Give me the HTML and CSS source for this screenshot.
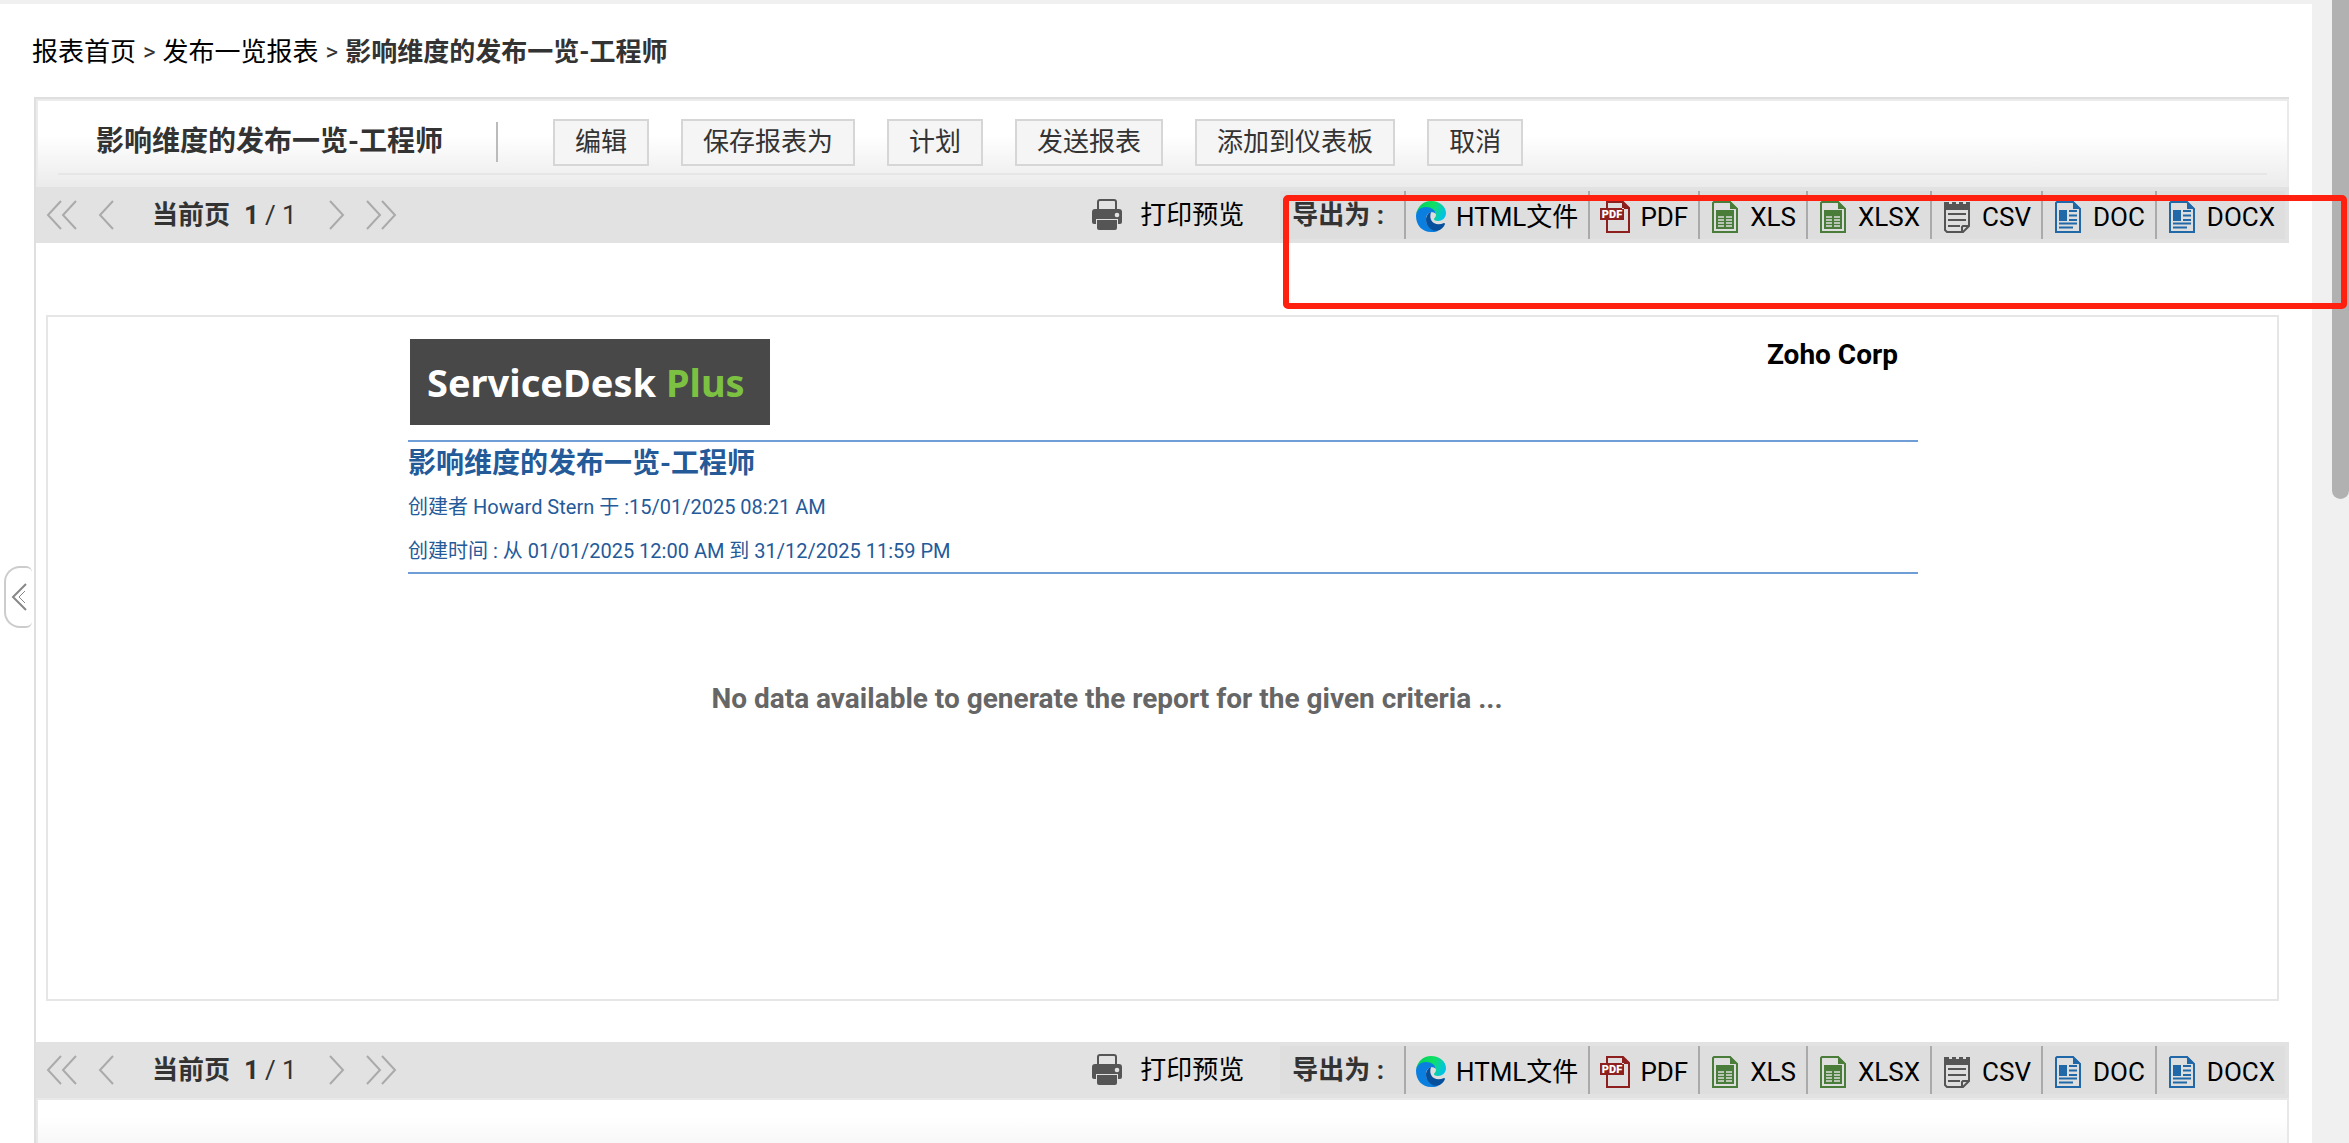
FILE: index.html
```html
<!DOCTYPE html>
<html lang="zh-CN">
<head>
  <meta charset="UTF-8">
  <meta name="viewport" content="width=device-width, initial-scale=1.0">
  <title>影响维度的发布一览-工程师</title>
  <link rel="stylesheet" href="styles.css">
</head>
<body>
  <!-- 图标 -->
  <svg class="sprite" aria-hidden="true">
    <defs>
      <linearGradient id="edgeTop" x1="0" y1="0.3" x2="1" y2="0.6">
        <stop offset="0" stop-color="#00d060"></stop>
        <stop offset="0.5" stop-color="#10e060"></stop>
        <stop offset="1" stop-color="#00c0f0"></stop>
      </linearGradient>
    </defs>
    <symbol id="i-first" viewBox="0 0 32 30"><path d="M15 1 2 15l13 14M30 1 17 15l13 14"></path></symbol>
    <symbol id="i-prev" viewBox="0 0 16 30"><path d="M15 1 2 15l13 14"></path></symbol>
    <symbol id="i-next" viewBox="0 0 16 30"><path d="M1 1l13 14L1 29"></path></symbol>
    <symbol id="i-last" viewBox="0 0 32 30"><path d="M2 1l13 14L2 29M17 1l13 14-13 14"></path></symbol>
    <symbol id="i-print" viewBox="0 0 30 32">
      <path d="M6 10V3a2 2 0 0 1 2-2h14a2 2 0 0 1 2 2v7" fill="none" stroke="#555" stroke-width="2"></path>
      <path d="M3 10h24a3 3 0 0 1 3 3v10a2 2 0 0 1-2 2h-2v-5H4v5H2a2 2 0 0 1-2-2V13a3 3 0 0 1 3-3z" fill="#555"></path>
      <path d="M5 21h20v8a2 2 0 0 1-2 2H7a2 2 0 0 1-2-2z" fill="#555"></path>
      <circle cx="25" cy="16" r="2.3" fill="#e2e2e2"></circle>
    </symbol>
    <symbol id="i-html" viewBox="0 0 30 32">
      <path d="M0 14C1 6 7 0 15 0c9 0 15 6 15 12 0 5-4 8-8 8-3 0-4-1-4-2s2-2 2-4c0-4-4-7-9-7-6 0-10 3-11 7z" fill="url(#edgeTop)"></path>
      <path d="M0 15c0-5 4-9 10-9 6 0 9 3 10 7-3-3-9-2-10 4-1 8 6 12 12 13-2 1-5 1-7 1C6 31 0 24 0 15z" fill="#0a7fe0"></path>
      <path d="M15 11c-3 1-5 4-5 8 0 6 5 11 11 11 4-1 7-4 8-7 0-1-1-1-1-1-9 4-16-2-13-11z" fill="#064f9c"></path>
    </symbol>
    <symbol id="i-xls" viewBox="0 0 30 32">
      <path d="M4 1h16l7 7v23H3V2z" fill="none" stroke="#4a7d39" stroke-width="2"></path>
      <path d="M20 0v8h8z" fill="#4a7d39"></path>
      <path d="M6 9h18v19H6z" fill="#4a7d39"></path>
      <path d="M8 16h6M16 16h6M8 19h6M16 19h6M8 22h6M16 22h6M8 25h6M16 25h6" stroke="#dedede" stroke-width="1.4"></path>
    </symbol>
    <symbol id="i-csv" viewBox="0 0 30 32">
      <path d="M3 2v27l2 2h16l6-6V2" fill="none" stroke="#555" stroke-width="2"></path>
      <path d="M2 1h5v2h3V1h4v2h3V1h4v2h3V1h4v8H2z" fill="#555"></path>
      <path d="M6 13h18M6 19h18M6 25h12M20 31v-5l1-1h6" fill="none" stroke="#555" stroke-width="2"></path>
    </symbol>
    <symbol id="i-doc" viewBox="0 0 30 32">
      <path d="M4 1h16l7 7v23H3V2z" fill="none" stroke="#2168a8" stroke-width="2"></path>
      <path d="M20 0v8h8z" fill="#2168a8"></path>
      <path d="M6 9h8v11H6z" fill="#2168a8"></path>
      <path d="M16 10h8M16 14.500h8M16 19h8M6 22.500h18M6 26.500h14" stroke="#2168a8" stroke-width="2"></path>
    </symbol>
  </svg>

  <main class="page">
    <nav class="breadcrumb">
      <a href="#">报表首页</a>
      <span>&gt;</span>
      <a href="#">发布一览报表</a>
      <span>&gt;</span>
      <strong>影响维度的发布一览-工程师</strong>
    </nav>

    <section class="panel">
      <header class="panel-head">
        <div class="head-row">
          <h1>影响维度的发布一览-工程师</h1>
          <div class="actions">
            <button type="button">编辑</button>
            <button type="button">保存报表为</button>
            <button type="button">计划</button>
            <button type="button">发送报表</button>
            <button type="button">添加到仪表板</button>
            <button type="button">取消</button>
          </div>
        </div>
      </header>

      <div class="toolbar">
        <div class="pager">
          <button type="button" class="double" aria-label="首页"><svg><use href="#i-first"></use></svg></button>
          <button type="button" aria-label="上一页"><svg><use href="#i-prev"></use></svg></button>
          <span class="pager-text"><b>当前页</b><b>1</b><span>/ 1</span></span>
          <button type="button" aria-label="下一页"><svg><use href="#i-next"></use></svg></button>
          <button type="button" class="double" aria-label="末页"><svg><use href="#i-last"></use></svg></button>
        </div>
        <a href="#" class="print"><svg><use href="#i-print"></use></svg>打印预览</a>
        <div class="export">
          <b class="export-label">导出为 :</b>
          <a href="#"><svg><use href="#i-html"></use></svg>HTML文件</a>
          <a href="#">
            <svg viewBox="0 0 30 32">
              <path d="M7 1h16l6 6v24H7z" fill="none" stroke="#8d1f1f" stroke-width="2"></path>
              <path d="M22 0v8h8zM0 7h24v12H0z" fill="#8d1f1f"></path>
              <text x="12" y="17" class="pdf-label">PDF</text>
            </svg>PDF
          </a>
          <a href="#"><svg><use href="#i-xls"></use></svg>XLS</a>
          <a href="#"><svg><use href="#i-xls"></use></svg>XLSX</a>
          <a href="#"><svg><use href="#i-csv"></use></svg>CSV</a>
          <a href="#"><svg><use href="#i-doc"></use></svg>DOC</a>
          <a href="#"><svg><use href="#i-doc"></use></svg>DOCX</a>
        </div>
      </div>

      <article class="report">
        <div class="report-top">
          <div class="logo">ServiceDesk <span>Plus</span></div>
          <strong class="company">Zoho Corp</strong>
        </div>
        <div class="report-info">
          <h2>影响维度的发布一览-工程师</h2>
          <p>创建者 Howard Stern 于 :15/01/2025 08:21 AM</p>
          <p>创建时间 : 从 01/01/2025 12:00 AM 到 31/12/2025 11:59 PM</p>
        </div>
        <p class="empty">No data available to generate the report for the given criteria ...</p>
      </article>

      <div class="toolbar">
        <div class="pager">
          <button type="button" class="double" aria-label="首页"><svg><use href="#i-first"></use></svg></button>
          <button type="button" aria-label="上一页"><svg><use href="#i-prev"></use></svg></button>
          <span class="pager-text"><b>当前页</b><b>1</b><span>/ 1</span></span>
          <button type="button" aria-label="下一页"><svg><use href="#i-next"></use></svg></button>
          <button type="button" class="double" aria-label="末页"><svg><use href="#i-last"></use></svg></button>
        </div>
        <a href="#" class="print"><svg><use href="#i-print"></use></svg>打印预览</a>
        <div class="export">
          <b class="export-label">导出为 :</b>
          <a href="#"><svg><use href="#i-html"></use></svg>HTML文件</a>
          <a href="#">
            <svg viewBox="0 0 30 32">
              <path d="M7 1h16l6 6v24H7z" fill="none" stroke="#8d1f1f" stroke-width="2"></path>
              <path d="M22 0v8h8zM0 7h24v12H0z" fill="#8d1f1f"></path>
              <text x="12" y="17" class="pdf-label">PDF</text>
            </svg>PDF
          </a>
          <a href="#"><svg><use href="#i-xls"></use></svg>XLS</a>
          <a href="#"><svg><use href="#i-xls"></use></svg>XLSX</a>
          <a href="#"><svg><use href="#i-csv"></use></svg>CSV</a>
          <a href="#"><svg><use href="#i-doc"></use></svg>DOC</a>
          <a href="#"><svg><use href="#i-doc"></use></svg>DOCX</a>
        </div>
      </div>
      <footer class="panel-foot"></footer>
    </section>
  </main>

  <div class="gutter">
    <div class="thumb"></div>
  </div>

  <!-- 侧边栏展开按钮 -->
  <button type="button" class="side-toggle" aria-label="展开侧边栏">
    <svg viewBox="0 0 16 28"><path d="M15 1 2 14l13 13" stroke-width="2"></path><path d="M14 8l-6 6 6 6"></path></svg>
  </button>

  <div class="highlight"></div>
</body>
</html>
```
FILE: styles.css
```css
* {
  box-sizing: border-box;
}

body {
  display: flex;
  position: relative;
  height: 100vh;
  margin: 0;
  overflow: hidden;
  background-color: #fff;
  color: #333;
  font-family: Roboto, "Noto Sans CJK SC", sans-serif;
  font-size: 26px;
  line-height: 36px;
}

h1, h2, p {
  margin: 0;
}

a {
  color: #000;
  text-decoration: none;
}

button {
  font: inherit;
  color: inherit;
  cursor: pointer;
}

.sprite {
  position: absolute;
  width: 0;
  height: 0;
}

.page {
  flex: 1;
  min-width: 0;
  padding: 0 23px 0 34px;
  border-top: 4px solid #f0f0f0;
}

/* 导航路径 */
.breadcrumb {
  display: flex;
  gap: 7px;
  height: 93px;
  padding-top: 30px;
  margin-left: -2px;
}

.breadcrumb span {
  font-size: 24px;
}

/* 报表面板 */
.panel {
  border: 2px solid #dfdfdf;
  border-width: 2px 0 0 2px;
}

.panel-head {
  height: 88px;
  padding: 0 20px;
  border: 2px solid #ebebeb;
  border-bottom: none;
  background: linear-gradient(#fff 40%, #ebebeb);
}

.head-row {
  display: flex;
  align-items: center;
  height: 74px;
  padding: 10px 38px 0;
  border-bottom: 2px solid #e6e6e6;
}

h1 {
  padding-right: 53px;
  font-size: 28px;
  line-height: 40px;
  border-right: 2px solid #bbb;
}

.actions {
  display: flex;
  gap: 32px;
  margin-left: 55px;
}

.actions button {
  height: 47px;
  padding: 0 20px;
  border: 2px solid #d6d6d6;
  background-color: #f5f5f5;
}

/* 工具栏 */
.toolbar {
  display: flex;
  align-items: center;
  height: 56px;
  padding: 0 4px 0 10px;
  background-color: #e2e2e2;
}

.pager {
  display: flex;
  align-items: center;
  gap: 20px;
}

.pager button {
  display: flex;
  padding: 0;
  border: none;
  background: none;
}

.pager svg {
  width: 16px;
  height: 30px;
  fill: none;
  stroke: #aaa;
  stroke-width: 2;
}

.pager .double svg {
  width: 32px;
}

.pager-text {
  display: flex;
  padding: 0 12px 0 18px;
}

.pager-text b:first-child {
  margin-right: 14px;
}

.pager-text b:nth-child(2) {
  margin-right: 6px;
}

.print {
  display: flex;
  align-items: center;
  gap: 18px;
  margin-left: auto;
}

.print svg {
  width: 30px;
  height: 32px;
}

.export {
  display: flex;
  height: 48px;
  margin-left: 36px;
  background-color: #dedede;
}

.export-label {
  padding: 6px 20px 0 12px;
}

.export a {
  display: flex;
  gap: 10px;
  padding: 8px 10px 0;
  border-left: 2px solid #aaa;
}

.export svg {
  width: 30px;
  height: 32px;
  margin-top: 2px;
}

.pdf-label {
  font-family: Roboto, sans-serif;
  font-size: 11px;
  font-weight: 900;
  text-anchor: middle;
  fill: #fff;
}

/* 报表内容 */
.report {
  height: 686px;
  margin: 72px 10px 41px;
  padding: 22px 359px 0 360px;
  border: 2px solid #e6e6e6;
}

.report-top {
  display: flex;
  justify-content: space-between;
  padding: 0 20px 15px 2px;
}

.logo {
  width: 360px;
  height: 86px;
  padding-left: 17px;
  background-color: #484848;
  color: #fff;
  font-family: "Noto Sans", "Open Sans", sans-serif;
  font-size: 38px;
  font-weight: bold;
  line-height: 86px;
}

.logo span {
  color: #7cc142;
}

.company {
  color: #000;
  font-size: 28px;
  line-height: 32px;
}

.report-info {
  height: 134px;
  border: 2px solid #6f9ed6;
  border-width: 2px 0;
  color: #255a99;
  font-size: 20px;
}

.report-info h2 {
  font-size: 28px;
  line-height: 43px;
}

.report-info p {
  line-height: 44px;
}

.empty {
  padding: 107px 112px 0 0;
  color: #666;
  font-size: 28px;
  font-weight: bold;
  text-align: center;
}

.panel-foot {
  height: 90px;
  border: 2px solid #e8e8e8;
  background: linear-gradient(#fff 20%, #ebebeb);
}

/* 滚动条 */
.gutter {
  width: 37px;
  padding-left: 20px;
  background-color: #f0f0f0;
}

.thumb {
  height: 499px;
  border-radius: 0 0 9px 9px;
  background-color: #b1b1b1;
}

.side-toggle {
  position: absolute;
  top: 566px;
  left: 4px;
  width: 28px;
  height: 62px;
  padding: 0 0 0 5px;
  border: 2px solid #ccc;
  border-right: none;
  border-radius: 16px 6px 6px 16px;
  background-color: #fff;
}

.side-toggle svg {
  display: block;
  width: 16px;
  height: 28px;
  fill: none;
  stroke: #888;
}

.highlight {
  position: absolute;
  top: 195px;
  right: 2px;
  width: 1064px;
  height: 114px;
  border: 6px solid #ff2010;
  border-radius: 5px;
}
```
